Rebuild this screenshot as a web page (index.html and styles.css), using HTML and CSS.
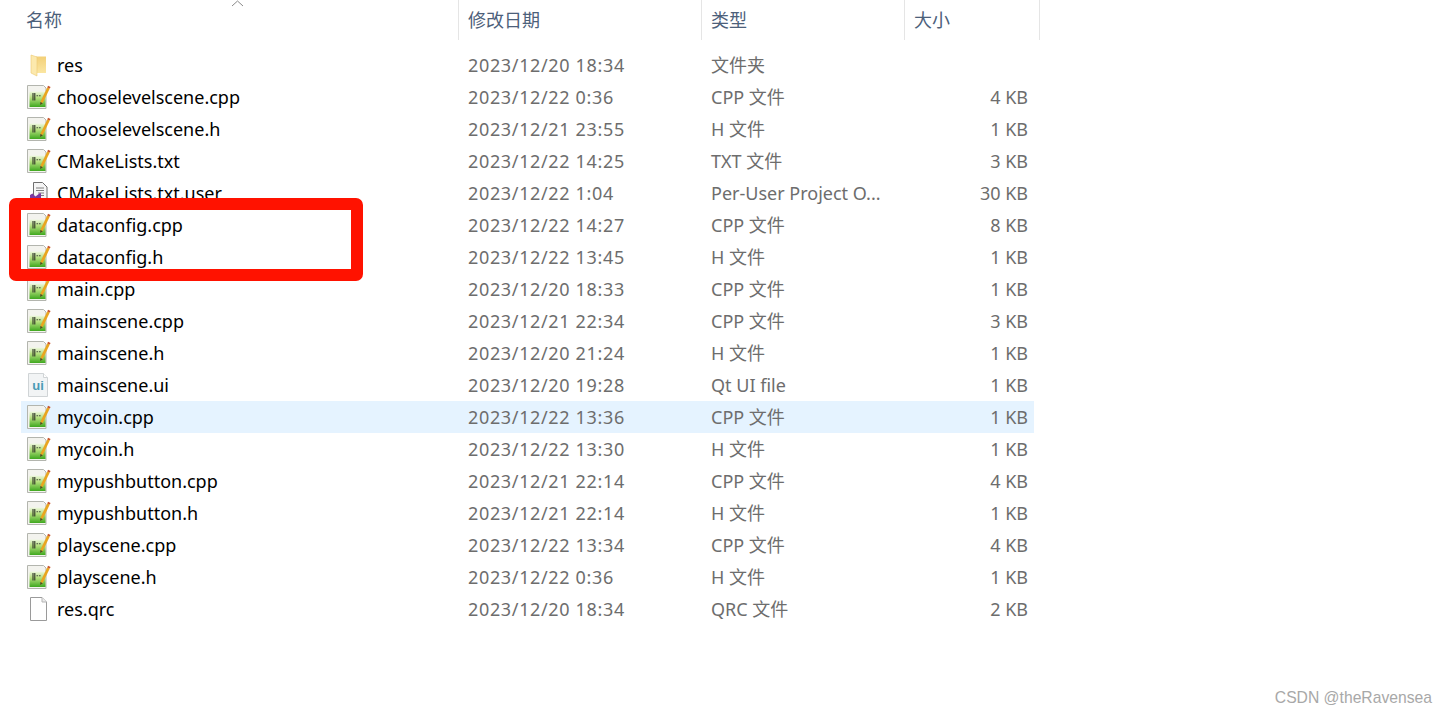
FILE: index.html
```html
<!DOCTYPE html>
<html lang="zh-CN">
<head>
    <meta charset="UTF-8">
    <title>res</title>
    <link rel="stylesheet" href="styles.css">
</head>
<body>
    <!-- Icons -->
    <svg class="icon-defs" width="0" height="0">
        <defs>
            <linearGradient id="paneGreen" x1="0" y1="0" x2="0" y2="1">
                <stop offset="0" stop-color="#eef7e0"/>
                <stop offset=".4" stop-color="#b6e07e"/>
                <stop offset="1" stop-color="#3fa81f"/>
            </linearGradient>
            <linearGradient id="folderBack" x1="0" y1="0" x2="0" y2="1">
                <stop offset="0" stop-color="#f3d078"/>
                <stop offset="1" stop-color="#fbe6a2"/>
            </linearGradient>
        </defs>
        <symbol id="folder" viewBox="0 0 24 24">
            <path d="M9 3.500h10v16.500H9z" fill="url(#folderBack)"/>
            <path d="M4 2l6 2v19l-6-3z" fill="#fce9ad" stroke="#ecca72" stroke-width=".6"/>
        </symbol>
        <symbol id="cpp" viewBox="0 0 24 24">
            <path d="M.500.500h16l2.500 2.500v20.500H.500z" fill="#f3f3ee" stroke="#b3b5ae"/>
            <path d="M2.500 6.500h16v15.500h-16z" fill="url(#paneGreen)"/>
            <path d="M6 8v7.500M7.800 8v7.500" stroke="#2e3526" stroke-width="1.100"/>
            <path d="M9.500 10.800h4.500" stroke="#414b37" stroke-width="1.100" stroke-dasharray="1.600 .9"/>
            <path d="M14.500 17.500L21.500 3" stroke="#e9a520" stroke-width="2.800"/>
            <path d="M21.500 3l.8-1.700" stroke="#c8552b" stroke-width="2.800"/>
            <path d="M13.400 17l2.400 1.200-2.600 1.800z" fill="#5a4020"/>
        </symbol>
        <symbol id="vcfile" viewBox="0 0 24 24">
            <path d="M6.500 1.500h9l4.500 4.500v17h-13.500z" fill="#f5f5f5" stroke="#6f6f6f"/>
            <path d="M9 7h8M9 9.500h8M11 12h6M12.500 14.500h4.500" stroke="#7e7e7e"/>
            <path d="M3 14l2.500-1.500 3 3 4.500-3.500 1 .5v11H3z" fill="#7d3aa0"/>
        </symbol>
        <symbol id="blank" viewBox="0 0 24 24">
            <path d="M3.500.500h11.500l4.500 4.500v18.500h-16z" fill="#fff" stroke="#9a9a9a"/>
            <path d="M15 .500v4.500h4.500" fill="#ececec" stroke="#b5b5b5"/>
        </symbol>
    </svg>

    <!-- Column headers -->
    <div class="header">
        <div class="head-cell head-name">名称
            <svg class="sort-arrow" width="13" height="7" viewBox="0 0 13 7"><path d="M1 6l5.500-5L12 6" fill="none" stroke="#8a8a8a"/></svg>
        </div>
        <div class="head-cell head-date">修改日期</div>
        <div class="head-cell head-type">类型</div>
        <div class="head-cell head-size">大小</div>
    </div>

    <!-- File list -->
    <div class="list">
        <div class="row"><div class="name"><svg class="icon"><use href="#folder"/></svg>res</div><div class="date">2023/12/20 18:34</div><div class="type">文件夹</div><div class="size"></div></div>
        <div class="row"><div class="name"><svg class="icon"><use href="#cpp"/></svg>chooselevelscene.cpp</div><div class="date">2023/12/22 0:36</div><div class="type">CPP 文件</div><div class="size">4 KB</div></div>
        <div class="row"><div class="name"><svg class="icon"><use href="#cpp"/></svg>chooselevelscene.h</div><div class="date">2023/12/21 23:55</div><div class="type">H 文件</div><div class="size">1 KB</div></div>
        <div class="row"><div class="name"><svg class="icon"><use href="#cpp"/></svg>CMakeLists.txt</div><div class="date">2023/12/22 14:25</div><div class="type">TXT 文件</div><div class="size">3 KB</div></div>
        <div class="row"><div class="name"><svg class="icon"><use href="#vcfile"/></svg>CMakeLists.txt.user</div><div class="date">2023/12/22 1:04</div><div class="type">Per-User Project O...</div><div class="size">30 KB</div></div>
        <div class="row"><div class="name"><svg class="icon"><use href="#cpp"/></svg>dataconfig.cpp</div><div class="date">2023/12/22 14:27</div><div class="type">CPP 文件</div><div class="size">8 KB</div></div>
        <div class="row"><div class="name"><svg class="icon"><use href="#cpp"/></svg>dataconfig.h</div><div class="date">2023/12/22 13:45</div><div class="type">H 文件</div><div class="size">1 KB</div></div>
        <div class="row"><div class="name"><svg class="icon"><use href="#cpp"/></svg>main.cpp</div><div class="date">2023/12/20 18:33</div><div class="type">CPP 文件</div><div class="size">1 KB</div></div>
        <div class="row"><div class="name"><svg class="icon"><use href="#cpp"/></svg>mainscene.cpp</div><div class="date">2023/12/21 22:34</div><div class="type">CPP 文件</div><div class="size">3 KB</div></div>
        <div class="row"><div class="name"><svg class="icon"><use href="#cpp"/></svg>mainscene.h</div><div class="date">2023/12/20 21:24</div><div class="type">H 文件</div><div class="size">1 KB</div></div>
        <div class="row"><div class="name"><svg class="icon" viewBox="0 0 24 24"><path d="M1.500 .500h15l4 4v19h-19z" fill="#f2f4f5" stroke="#d0d4d6"/><path d="M16.500 .500v4h4" fill="#fff" stroke="#d0d4d6"/><text x="11" y="17" class="icon-label" text-anchor="middle">ui</text></svg>mainscene.ui</div><div class="date">2023/12/20 19:28</div><div class="type">Qt UI file</div><div class="size">1 KB</div></div>
        <div class="row selected"><div class="name"><svg class="icon"><use href="#cpp"/></svg>mycoin.cpp</div><div class="date">2023/12/22 13:36</div><div class="type">CPP 文件</div><div class="size">1 KB</div></div>
        <div class="row"><div class="name"><svg class="icon"><use href="#cpp"/></svg>mycoin.h</div><div class="date">2023/12/22 13:30</div><div class="type">H 文件</div><div class="size">1 KB</div></div>
        <div class="row"><div class="name"><svg class="icon"><use href="#cpp"/></svg>mypushbutton.cpp</div><div class="date">2023/12/21 22:14</div><div class="type">CPP 文件</div><div class="size">4 KB</div></div>
        <div class="row"><div class="name"><svg class="icon"><use href="#cpp"/></svg>mypushbutton.h</div><div class="date">2023/12/21 22:14</div><div class="type">H 文件</div><div class="size">1 KB</div></div>
        <div class="row"><div class="name"><svg class="icon"><use href="#cpp"/></svg>playscene.cpp</div><div class="date">2023/12/22 13:34</div><div class="type">CPP 文件</div><div class="size">4 KB</div></div>
        <div class="row"><div class="name"><svg class="icon"><use href="#cpp"/></svg>playscene.h</div><div class="date">2023/12/22 0:36</div><div class="type">H 文件</div><div class="size">1 KB</div></div>
        <div class="row"><div class="name"><svg class="icon"><use href="#blank"/></svg>res.qrc</div><div class="date">2023/12/20 18:34</div><div class="type">QRC 文件</div><div class="size">2 KB</div></div>
    </div>

    <!-- Red annotation drawn over the list -->
    <div class="highlight-box"></div>

    <div class="watermark">CSDN @theRavensea</div>
</body>
</html>
```

FILE: styles.css
```css
body {
    margin: 0;
    height: 713px;
    overflow: hidden;
    position: relative;
    background: #fff;
    font-family: "Noto Sans", "Noto Sans CJK SC", sans-serif;
    font-size: 18px;
}

.icon-defs {
    position: absolute;
}

.icon-label {
    font-family: "Liberation Sans", sans-serif;
    font-size: 13px;
    font-weight: 700;
    fill: #4a9ab5;
}

.header {
    display: flex;
    height: 40px;
    color: #4c607a;
}

.head-cell {
    box-sizing: border-box;
    line-height: 40px;
    border-right: 1px solid #e5e5e5;
    padding-left: 9px;
}

.head-name {
    position: relative;
    width: 459px;
    padding-left: 26px;
}

.head-date {
    width: 243px;
}

.head-type {
    width: 203px;
}

.head-size {
    width: 135px;
}

.sort-arrow {
    position: absolute;
    left: 231px;
    top: 0;
}

.list {
    margin: 9px 0 0 21px;
    width: 1013px;
}

.row {
    display: flex;
    height: 32px;
    line-height: 32px;
    color: #6d6d6d;
}

.row.selected {
    background: #e5f3ff;
}

.name {
    display: flex;
    align-items: center;
    width: 447px;
    color: #000;
}

.icon {
    width: 24px;
    height: 24px;
    margin: 0 6px;
    flex: none;
}

.date {
    width: 243px;
    letter-spacing: .65px;
}

.type {
    width: 203px;
    white-space: nowrap;
}

.size {
    width: 114px;
    text-align: right;
}

.highlight-box {
    position: absolute;
    left: 9px;
    top: 198px;
    width: 330px;
    height: 59px;
    border: 12px solid #ff1200;
    border-radius: 7px;
}

.watermark {
    position: absolute;
    right: 15px;
    top: 689px;
    font-family: "Liberation Sans", sans-serif;
    font-size: 15.7px;
    color: #a8a8a8;
}
```
